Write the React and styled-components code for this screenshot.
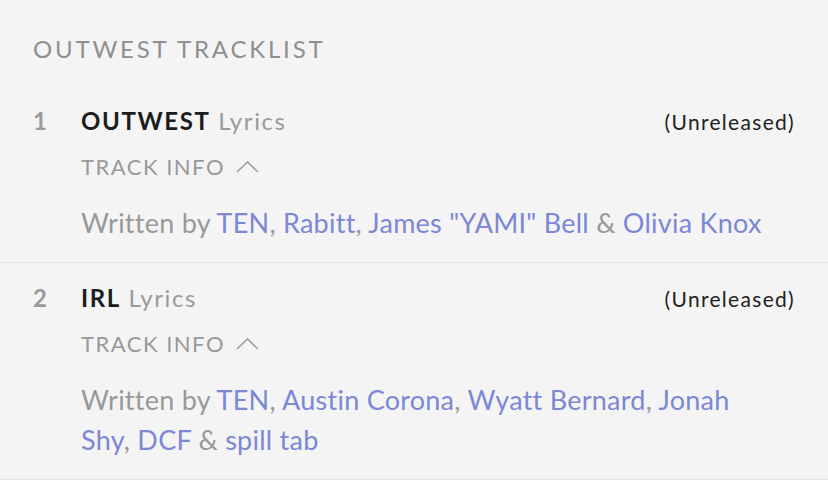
import React from "react";
import styled, { createGlobalStyle } from "styled-components";

const Global = createGlobalStyle`
  html, body { margin: 0; padding: 0; background: #f4f4f4; }
  body { font-family: Lato, "Open Sans", sans-serif; -webkit-font-smoothing: antialiased; }
`;

const Page = styled.div`
  width: 828px;
  height: 480px;
  background: #f4f4f4;
  overflow: hidden;
`;

const Heading = styled.h2`
  margin: 0;
  padding: 34px 33px 22px;
  font-size: 24px;
  line-height: 30px;
  font-weight: 400;
  letter-spacing: 2.8px;
  color: #8f8f8f;
`;

const Track = styled.div`
  display: grid;
  grid-template-columns: 48px 1fr auto;
  align-items: baseline;
  padding: 20px 33px 19px;
  border-bottom: 1px solid #e3e3e3;
`;

const Num = styled.div`
  font-size: 24px;
  line-height: 30px;
  font-weight: 700;
  color: #9a9a9a;
`;

const Title = styled.div`
  font-size: 24px;
  line-height: 30px;
  letter-spacing: 1.6px;
  color: #9a9a9a;
`;

const Name = styled.span`
  color: #1c1c1c;
  font-weight: 700;
`;

const Status = styled.div`
  font-size: 21px;
  line-height: 30px;
  letter-spacing: 1.3px;
  color: #222;
`;

const Info = styled.div`
  grid-column: 2 / 4;
  display: flex;
  flex-direction: column;
`;

const InfoToggle = styled.div`
  margin-top: 15px;
  display: flex;
  align-items: center;
  gap: 11px;
  font-size: 22px;
  line-height: 30px;
  letter-spacing: 1.5px;
  color: #999;
`;

const Credits = styled.div`
  margin-top: 21px;
  padding-right: 22px;
  font-size: 27px;
  line-height: 40px;
  letter-spacing: 0.25px;
  color: #999;
`;

const Plain = styled.span`
  color: #999;
`;

const Writer = styled.a`
  color: #7c87d6;
  text-decoration: none;
`;

const Chevron = () => (
  <svg width="23" height="12" viewBox="0 0 23 12" fill="none">
    <path d="M1 11 L11.5 1 L22 11" stroke="#9a9a9a" strokeWidth="1.5" />
  </svg>
);

const tracks = [
  { n: 1, title: "OUTWEST", writers: ["TEN", "Rabitt", 'James "YAMI" Bell', "Olivia Knox"] },
  { n: 2, title: "IRL", writers: ["TEN", "Austin Corona", "Wyatt Bernard", "Jonah Shy", "DCF", "spill tab"] },
];

const Writers = ({ list }) => (
  <>
    <Plain>Written by </Plain>
    {list.map((w, i) => (
      <React.Fragment key={w}>
        <Writer href="#">{w}</Writer>
        {i < list.length - 2 ? <Plain>, </Plain> : i === list.length - 2 ? <Plain> &amp; </Plain> : null}
      </React.Fragment>
    ))}
  </>
);

export default function App() {
  return (
    <Page>
      <Global />
      <Heading>OUTWEST TRACKLIST</Heading>
      {tracks.map((t) => (
        <Track key={t.n}>
          <Num>{t.n}</Num>
          <Title>
            <Name>{t.title}</Name> Lyrics
          </Title>
          <Status>(Unreleased)</Status>
          <Info>
            <InfoToggle>
              TRACK INFO <Chevron />
            </InfoToggle>
            <Credits>
              <Writers list={t.writers} />
            </Credits>
          </Info>
        </Track>
      ))}
    </Page>
  );
}
